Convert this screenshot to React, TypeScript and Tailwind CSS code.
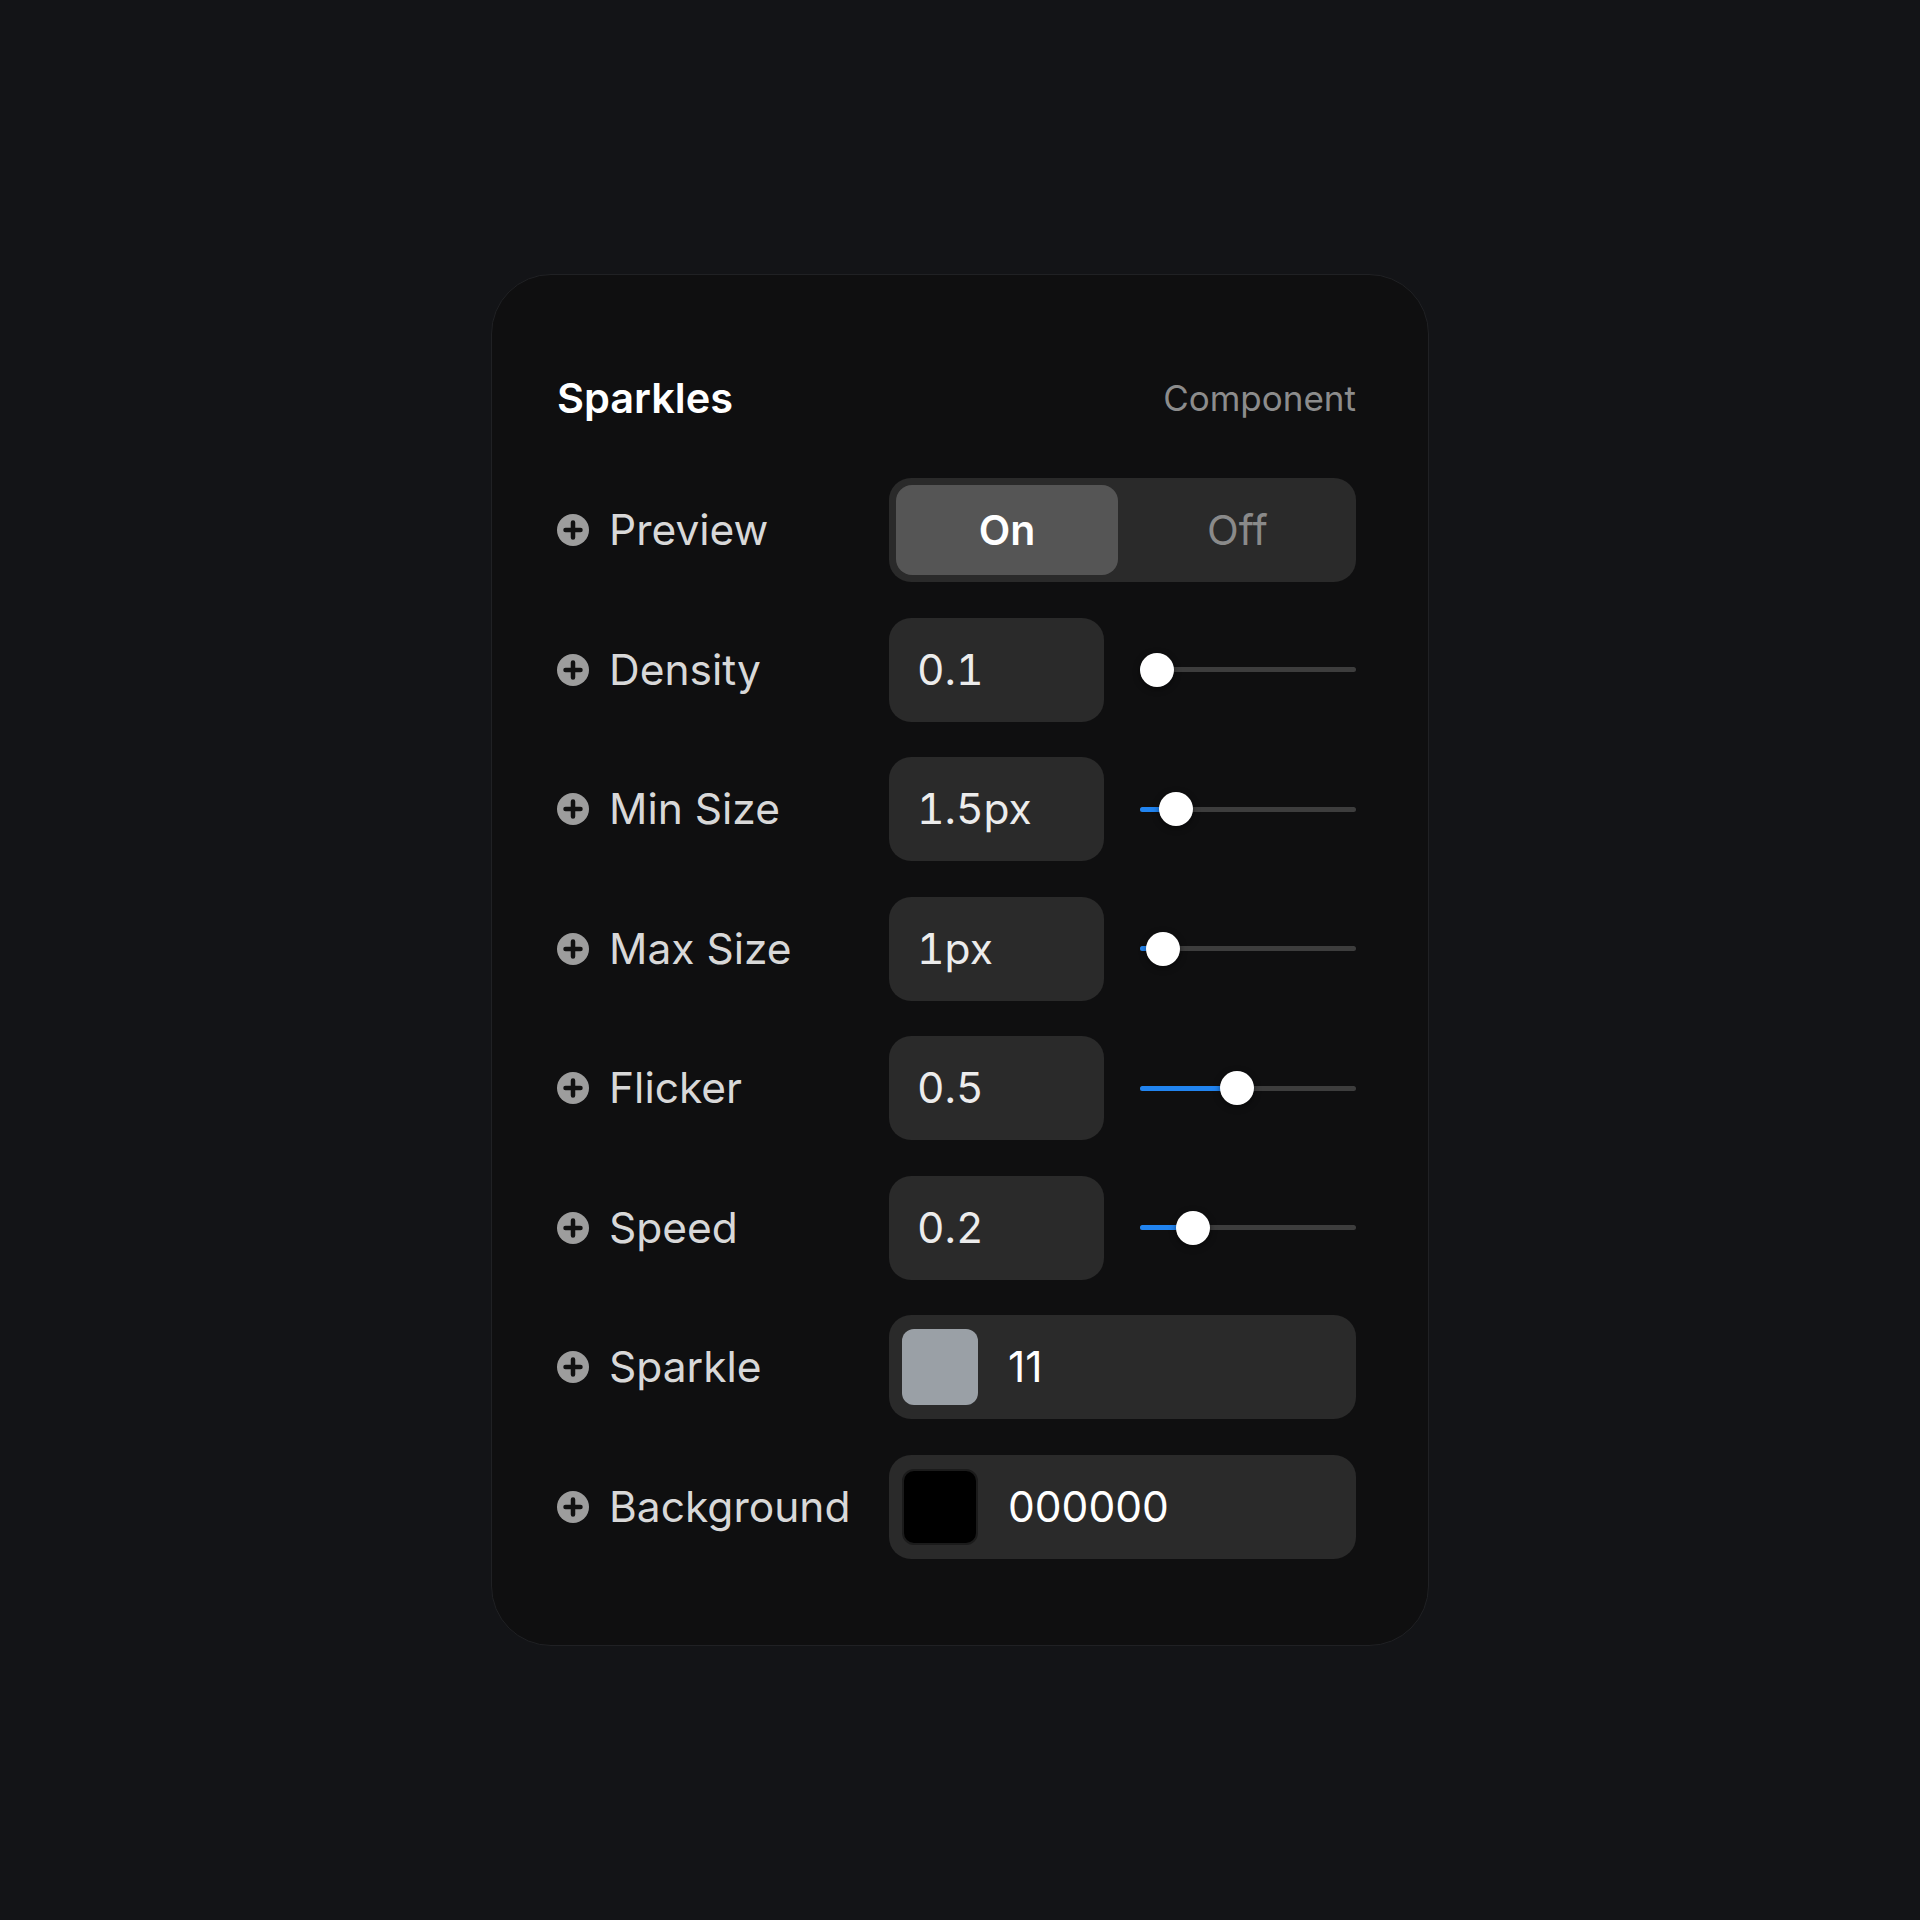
import React from 'react'

const sliders = [
  { label: 'Density', value: '0.1', p: 0 },
  { label: 'Min Size', value: '1.5px', p: 0.104 },
  { label: 'Max Size', value: '1px', p: 0.033 },
  { label: 'Flicker', value: '0.5', p: 0.44 },
  { label: 'Speed', value: '0.2', p: 0.2 },
]

const colors = [
  { label: 'Sparkle', value: '11', swatch: 'bg-[#9aa0a6]' },
  { label: 'Background', value: '000000', swatch: 'bg-[#000000] border-2 border-[#1b1b1b]' },
]

function PlusIcon() {
  return (
    <svg width="32" height="32" viewBox="0 0 32 32" className="shrink-0">
      <circle cx="16" cy="16" r="16" fill="#9d9d9d" />
      <path d="M16 8.5v15M8.5 16h15" stroke="#111111" strokeWidth="4.5" strokeLinecap="round" />
    </svg>
  )
}

function Label({ children }: { children: React.ReactNode }) {
  return (
    <div className="flex items-center gap-[20px] w-[332px]">
      <PlusIcon />
      <span className="text-[42.5px] text-[#d8d8d8] leading-none">{children}</span>
    </div>
  )
}

function Slider({ p }: { p: number }) {
  // thumb travels between the track ends, radius 17
  const left = 17 + p * 182
  return (
    <div className="relative w-[216px] h-[34px] flex items-center">
      <div className="w-full h-[5px] rounded-full bg-[#3d3d3d]" />
      <div className="absolute left-0 h-[5px] rounded-full bg-[#2184f0]" style={{ width: left }} />
      <div
        className="absolute top-0 w-[34px] h-[34px] rounded-full bg-white shadow-[0_2px_6px_rgba(0,0,0,0.5)]"
        style={{ left: left - 17 }}
      />
    </div>
  )
}

export default function App() {
  return (
    <div
      className="w-full h-[1920px] bg-[#131417] flex items-center justify-center"
      style={{ fontFamily: 'Inter, "Noto Sans", sans-serif' }}
    >
      <div className="w-[938px] rounded-[60px] border border-[#202124] bg-[#0f0f10] pl-[65px] pr-[72px] pt-[99px] pb-[86px]">
        {/* Header */}
        <div className="h-[48px] flex items-center justify-between mb-[56px]">
          <span className="text-[41.5px] font-semibold text-white">Sparkles</span>
          <span className="text-[35px] text-[#8c8c8c]">Component</span>
        </div>

        <div className="flex flex-col gap-[35.5px]">
          {/* Preview toggle */}
          <div className="h-[104px] flex items-center">
            <Label>Preview</Label>
            <div className="flex-1 h-[104px] rounded-[22px] bg-[#2a2a2a] p-[7px] flex">
              <div className="w-[222px] rounded-[16px] bg-[#555555] flex items-center justify-center text-[41px] font-semibold text-white">
                On
              </div>
              <div className="flex-1 flex items-center justify-center pl-[8px] text-[41.5px] text-[#8a8a8a]">Off</div>
            </div>
          </div>

          {sliders.map((s) => (
            <div key={s.label} className="h-[104px] flex items-center">
              <Label>{s.label}</Label>
              <div className="flex-1 flex items-center gap-[36px]">
                <div className="w-[215px] h-[104px] rounded-[22px] bg-[#2a2a2a] flex items-center pl-[28px] text-[42.5px] text-[#ececec] tabular-nums">
                  {s.value}
                </div>
                <Slider p={s.p} />
              </div>
            </div>
          ))}

          {colors.map((c) => (
            <div key={c.label} className="h-[104px] flex items-center">
              <Label>{c.label}</Label>
              <div className="flex-1 h-[104px] rounded-[22px] bg-[#2a2a2a] flex items-center pl-[13px] gap-[30px]">
                <div className={`w-[76px] h-[76px] rounded-[12px] ${c.swatch}`} />
                <span className="text-[42.5px] text-white">{c.value}</span>
              </div>
            </div>
          ))}
        </div>
      </div>
    </div>
  )
}
